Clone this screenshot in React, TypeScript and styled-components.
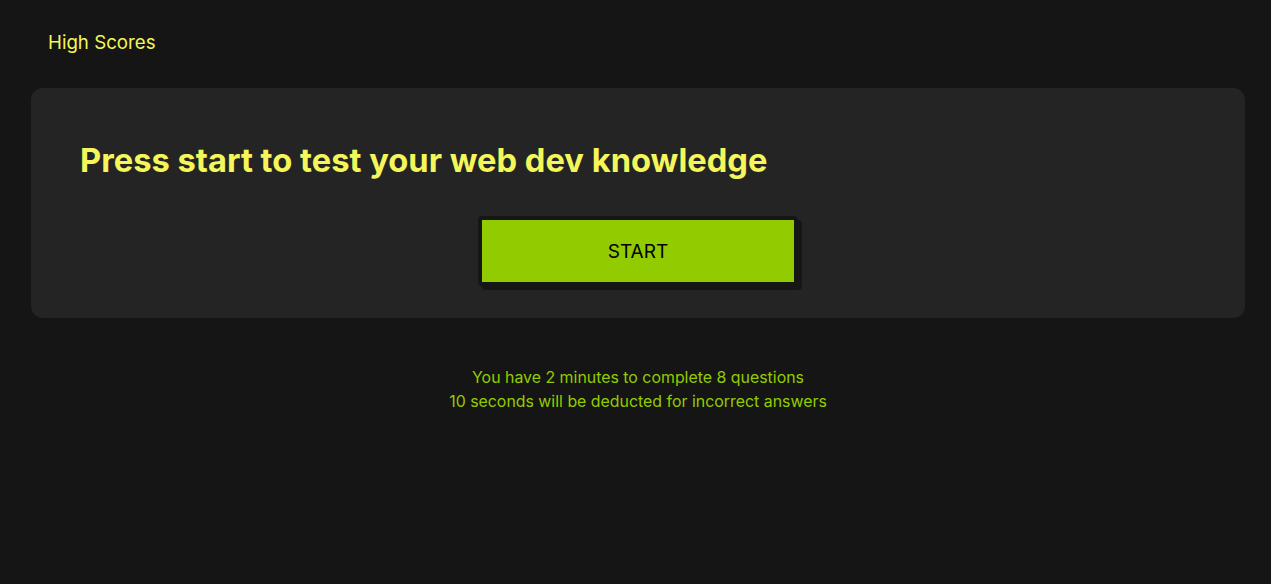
import React from "react";
import styled, { createGlobalStyle } from "styled-components";

const Global = createGlobalStyle`
  html, body { margin: 0; padding: 0; background: #151515; }
  body { font-family: Inter, "Open Sans", "Liberation Sans", sans-serif; }
  * { box-sizing: border-box; }
`;

const Page = styled.div`
  min-height: 584px;
  background: #151515;
  padding: 28px 26px 0 31px;
`;

const Nav = styled.nav`
  display: flex;
  padding-left: 17px;
  height: 28px;
  align-items: center;
`;

const NavLink = styled.a`
  color: #f4f65a;
  font-size: 18.7px;
  text-decoration: none;
  cursor: pointer;
`;

const Card = styled.section`
  margin-top: 32px;
  background: #242424;
  border-radius: 12px;
  padding: 52px 49px 32px;
  display: flex;
  flex-direction: column;
`;

const Heading = styled.h1`
  margin: 0;
  color: #f4f65a;
  font-size: 32.7px;
  font-weight: 700;
  line-height: 40px;
`;

const ButtonRow = styled.div`
  display: flex;
  justify-content: center;
  margin-top: 36px;
`;

const StartButton = styled.button`
  width: 320px;
  height: 70px;
  background: #92cc00;
  border: 4px solid #161616;
  border-radius: 4px;
  box-shadow: 4px 4px 0 #161616;
  font-family: Inter, "Open Sans", sans-serif;
  font-size: 19px;
  color: #000;
  cursor: pointer;
`;

const Info = styled.div`
  margin-top: 48px;
  text-align: center;
  color: #92cc00;
  font-size: 15.9px;
  line-height: 24px;
`;

export default function App() {
  return (
    <>
      <Global />
      <Page>
        <Nav>
          <NavLink>High Scores</NavLink>
        </Nav>
        <Card>
          <Heading>Press start to test your web dev knowledge</Heading>
          <ButtonRow>
            <StartButton>START</StartButton>
          </ButtonRow>
        </Card>
        <Info>
          <div>You have 2 minutes to complete 8 questions</div>
          <div>10 seconds will be deducted for incorrect answers</div>
        </Info>
      </Page>
    </>
  );
}
